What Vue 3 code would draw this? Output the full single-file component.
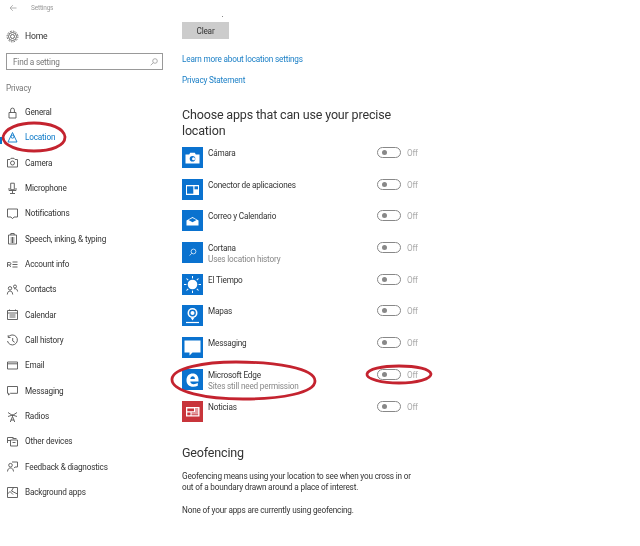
<script setup>
const nav = [
  { label: 'General', d: 'M3 6.500h7v5.500H3zM4.600 6.500V4a1.900 1.900 0 0 1 3.800 0v2.500' },
  { label: 'Location', active: true, d: 'M6.500 1.500 2 11h9zM6.500 4.200a1.500 1.500 0 1 1 0 3 1.500 1.500 0 0 1 0-3z' },
  { label: 'Camera', d: 'M1.500 3.500h2.500l1-1.200h3l1 1.200h2.500v7.500h-10zM6.500 5a2 2 0 1 1 0 4 2 2 0 0 1 0-4z' },
  { label: 'Microphone', d: 'M4.700 1.200h3.600v6.500H4.700zM3 6v2.500h7V6M6.500 8.500V11M4 11.500h5' },
  { label: 'Notifications', d: 'M1.500 2h10v8H8l-1.500 1.700L5 10H1.500z' },
  { label: 'Speech, inking, & typing', d: 'M2.500 3h8v9h-8zM4.800 3V1.500h3.400V3M4.500 6h4M4.500 8h4M4.500 10h4M6.500 5v6' },
  { label: 'Account info', d: 'M1.500 9V4.500h2.200a1.200 1.200 0 0 1 0 2.400H1.500M3.500 7l1.200 2M6.500 4h5M6.500 6.500h5M6.500 9h5' },
  { label: 'Contacts', d: 'M4 7a1.700 1.700 0 1 1 0-3.400A1.700 1.700 0 0 1 4 7zM1.300 11.500C1.500 9 2.500 8 4 8s2.500 1 2.700 3.500M9 5a1.500 1.500 0 1 1 0-3 1.500 1.500 0 0 1 0 3zM8 5.800c2-.5 3.500.5 3.600 2.700' },
  { label: 'Calendar', d: 'M1.500 2.500h10v9h-10zM1.500 5h10M3.500 1.500v1.500M9.500 1.500v1.500M3.500 7h6M3.500 9h6' },
  { label: 'Call history', d: 'M2.200 3.200A5 5 0 1 1 1.500 7M2.200 1.200v2.300h2.300M6.700 4v3l2 1.300' },
  { label: 'Email', d: 'M1.500 3h10v7h-10zM1.500 4.800h10' },
  { label: 'Messaging', d: 'M1.500 2.500h10v6.800H4.500l-2 1.700V9.300h-1z' },
  { label: 'Radios', d: 'M2 2.500l4.500 3 4.500-3M6.500 4.500v2M2 6.500 6.500 5l4.500 1.500M4.300 12l2.200-5.500L8.700 12M4.800 10h3.400' },
  { label: 'Other devices', d: 'M1.500 8V2.500h6M1.500 5.500h3M4.500 5h7v6h-7zM6.500 3.500h4M6.500 7.500h3' },
  { label: 'Feedback & diagnostics', d: 'M4.500 7a1.800 1.800 0 1 1 0-3.600 1.800 1.800 0 0 1 0 3.600zM1.500 11.500C1.700 9 3 8 4.500 8S7.300 9 7.500 11.500M6 2h5.500v5H9L8 8.200' },
  { label: 'Background apps', d: 'M1.500 1.500h10v10h-10zM1.500 8l2.500-2.500 3 3M7.500 1.500 5.500 5l6 3' },
]

const apps = [
  { name: 'Cámara', kind: 'camera' },
  { name: 'Conector de aplicaciones', kind: 'connector' },
  { name: 'Correo y Calendario', kind: 'mail' },
  { name: 'Cortana', sub: 'Uses location history', kind: 'cortana' },
  { name: 'El Tiempo', kind: 'weather' },
  { name: 'Mapas', kind: 'maps' },
  { name: 'Messaging', kind: 'message' },
  { name: 'Microsoft Edge', sub: 'Sites still need permission', kind: 'edge' },
  { name: 'Noticias', kind: 'news' },
]
const rays = [0, 45, 90, 135, 180, 225, 270, 315]
</script>

<template>
  <div class="page">
    <aside class="side">
      <div class="titlebar">
        <svg class="back" viewBox="0 0 8 8" width="8" height="8"><path d="M7.500 4H1M3.800 1.200 1 4l2.800 2.800" /></svg>
        <span>Settings</span>
      </div>
      <div class="home">
        <svg class="nav-icon" viewBox="0 0 13 13" width="13" height="13">
          <circle cx="6.500" cy="6.500" r="2" />
          <circle cx="6.500" cy="6.500" r="4" />
          <circle cx="6.500" cy="6.500" r="5.400" stroke-dasharray="1.600 1.200" />
        </svg>
        <span>Home</span>
      </div>
      <div class="search">
        <span>Find a setting</span>
        <svg viewBox="0 0 8 8" width="8" height="8"><circle cx="5" cy="3" r="2.300" /><path d="M3.300 4.700.7 7.300" /></svg>
      </div>
      <div class="section">Privacy</div>
      <nav class="nav">
        <div v-for="item in nav" :key="item.label" class="nav-row" :class="{ active: item.active }">
          <svg class="nav-icon" viewBox="0 0 13 13" width="13" height="13"><path :d="item.d" /></svg>
          <span>{{ item.label }}</span>
        </div>
      </nav>
    </aside>

    <main class="main">
      <div class="speck"></div>
      <div class="clear">Clear</div>
      <a class="link first">Learn more about location settings</a>
      <a class="link second">Privacy Statement</a>
      <h2 class="choose">Choose apps that can use your precise<br />location</h2>

      <div class="apps">
        <div v-for="app in apps" :key="app.name" class="app">
          <svg class="tile" :class="{ red: app.kind === 'news' }" viewBox="0 0 21 21" width="21" height="21">
            <g v-if="app.kind === 'camera'">
              <path class="w" d="M3.500 7.500h3.700l1-1.700h4.600l1 1.700h3.700v9h-14z" />
              <circle cx="10.500" cy="11.800" r="2.800" fill="#0a72cf" />
              <circle cx="11.500" cy="11.800" r="1.500" fill="#fff" />
            </g>
            <g v-else-if="app.kind === 'connector'">
              <path class="w" d="M4 6h13v10H4z" />
              <path d="M5 7.300h6.300v7.400H5z" fill="#0a72cf" />
              <path d="M12.500 7.300h3.500v3h-3.500z" fill="#0a72cf" />
            </g>
            <g v-else-if="app.kind === 'mail'">
              <path class="w" d="M4.500 10.500 10.500 7l6 3.500V15.500h-12z" />
              <path d="M6.500 10 10.500 8l4 2-4 2.200z" fill="#0a72cf" />
            </g>
            <g v-else-if="app.kind === 'cortana'">
              <circle cx="11.500" cy="9.500" r="2.400" fill="none" stroke="#cfe3f6" stroke-width=".9" />
              <path d="M9.800 11.200 7.600 13.600" stroke="#cfe3f6" stroke-width=".9" />
            </g>
            <g v-else-if="app.kind === 'weather'">
              <circle cx="10.500" cy="10.500" r="4.800" fill="#fff" />
              <rect v-for="r in rays" :key="r" x="10" y="2" width="1" height="2.400" fill="#fff" :transform="`rotate(${r} 10.500 10.500)`" />
            </g>
            <g v-else-if="app.kind === 'maps'">
              <circle cx="10.500" cy="8" r="5" fill="#fff" />
              <circle cx="10.500" cy="8" r="3.400" fill="#0a72cf" />
              <circle cx="10.500" cy="8" r="2" fill="#fff" />
              <path class="w" d="M8.500 12.500h4l-2 3z" />
              <path d="M4 17.500h13" stroke="#fff" stroke-width="1.200" />
            </g>
            <path v-else-if="app.kind === 'message'" class="w" d="M2.500 3.500h16v12h-8l-3 3v-3h-5z" />
            <g v-else-if="app.kind === 'edge'">
              <path class="w" d="M4.500 11.200C4.500 7 7 4.500 10.800 4.500c3.500 0 5.700 2.400 5.700 6.500v1.400H8.300c.1 1.800 1.500 2.800 3.400 2.800 1.500 0 2.900-.4 4.100-1.100v2.600c-1.300.7-2.800 1-4.500 1-4.200 0-6.800-2.400-6.800-6.500zm3.800-1.300h4.600c0-1.500-.8-2.600-2.200-2.600-1.300 0-2.200 1-2.400 2.600z" />
            </g>
            <g v-else>
              <path class="w" d="M4 6h13.500v9.500H4z" />
              <path d="M5.300 7.500h6.700v2.800H5.300zM13 7.500h3.200v1H13zM13 9.500h3.200v1H13zM5.300 11.500h3.200v2.700H5.300zM9.500 11.500H16.200v1H9.500zM9.500 13.200H16.200v1H9.500z" fill="#c8353b" />
            </g>
          </svg>
          <div class="app-text">
            <div class="app-name">{{ app.name }}</div>
            <div v-if="app.sub" class="app-sub">{{ app.sub }}</div>
          </div>
          <div class="toggle"><i></i></div>
          <span class="off">Off</span>
        </div>
      </div>

      <h2 class="geo">Geofencing</h2>
      <p class="body">Geofencing means using your location to see when you cross in or<br />out of a boundary drawn around a place of interest.</p>
      <p class="body none">None of your apps are currently using geofencing.</p>
    </main>

    <svg class="marks" viewBox="0 0 640 546" width="640" height="546">
      <path d="M3 137c2-9 16-14 31-14 16 0 30 5 31 14 0 9-14 14-31 14-15 0-31-5-31-14" />
      <path d="M172 379c1-11 32-17 64-17 39 0 79 6 79 19 0 12-34 18-72 18-36 0-72-7-71-20z" />
      <path d="M367 374c1-5 15-8 32-8 18 0 31 3 32 8 0 5-14 9-32 9-17 0-33-4-32-9z" />
    </svg>
    <div class="edge-tick"></div>
  </div>
</template>

<style>
html, body { margin: 0; background: #fff; }
</style>

<style scoped>
.page {
  position: relative;
  display: flex;
  width: 640px;
  height: 546px;
  overflow: hidden;
  background: #fff;
  font-family: Roboto, "Liberation Sans", sans-serif;
  font-size: 8.2px;
  letter-spacing: -0.18px;
  color: #333;
  filter: blur(0.3px);
}
.side { width: 182px; flex: none; }
.titlebar {
  display: flex;
  align-items: center;
  height: 16px;
  padding-left: 9px;
  font-size: 6.500px;
  color: #999;
}
.titlebar span { margin-left: 14px; }
.back { fill: none; stroke: #aaa; stroke-width: .9; }
.home {
  display: flex;
  align-items: center;
  height: 20px;
  margin-top: 10px;
  padding-left: 6px;
  font-size: 8.600px;
  color: #333;
}
.home span { margin-left: 6px; }
.search {
  box-sizing: border-box;
  display: flex;
  align-items: center;
  justify-content: space-between;
  width: 157px;
  height: 17px;
  margin: 7px 0 0 6px;
  padding: 0 4px 0 6px;
  border: 1px solid #999;
  color: #777;
}
.search svg { fill: none; stroke: #999; stroke-width: .8; }
.section { margin-top: 11px; padding-left: 6px; height: 14px; line-height: 14px; color: #777; }
.nav { margin-top: 4.500px; }
.nav-row {
  position: relative;
  display: flex;
  align-items: center;
  height: 25.33px;
  padding-left: 6px;
  color: #333;
}
.nav-row span { margin-left: 6px; }
.nav-icon { flex: none; fill: none; stroke: #555; stroke-width: .9; }
.nav-row.active { color: #0a78c8; }
.nav-row.active .nav-icon { stroke: #0a78c8; }

.main { flex: 1; min-width: 0; position: relative; }
.speck { position: absolute; left: 40px; top: 16px; width: 1px; height: 1px; background: #888; }
.clear {
  width: 47px;
  height: 17px;
  margin-top: 22px;
  background: #ccc;
  color: #333;
  text-align: center;
  line-height: 18px;
}
.link { display: block; height: 12px; line-height: 12px; color: #1a7fc6; }
.first { margin-top: 14px; }
.second { margin-top: 9px; }
.choose {
  margin: 21px 0 0;
  font-size: 12.500px;
  letter-spacing: -0.16px;
  font-weight: 400;
  line-height: 16px;
  color: #333;
}
.apps { margin-top: 8px; }
.app { position: relative; display: flex; height: 31.7px; }
.tile { flex: none; background: #0a72cf; }
.tile.red { background: #c8353b; }
.w { fill: #fff; }
.app-text { width: 156px; margin-left: 5px; padding-top: 1px; }
.app-name { height: 11px; line-height: 11px; color: #333; }
.app-sub { height: 11px; line-height: 11px; color: #888; }
.toggle {
  box-sizing: border-box;
  position: relative;
  width: 24px;
  height: 11px;
  margin-left: 13px;
  border: 1px solid #888;
  border-radius: 6px;
}
.toggle i {
  position: absolute;
  left: 4px;
  top: 2px;
  width: 5px;
  height: 5px;
  border-radius: 50%;
  background: #888;
}
.off { margin-left: 6px; padding-top: 1px; height: 11px; line-height: 11px; color: #aaa; }
.geo { margin: 13px 0 0; font-size: 12.500px; letter-spacing: -0.16px; font-weight: 400; line-height: 16px; color: #333; }
.body { margin: 10px 0 0; line-height: 11px; color: #333; }
.body.none { margin-top: 12px; }
.marks { position: absolute; left: 0; top: 0; fill: none; stroke: #c4232f; stroke-width: 2.800; pointer-events: none; }
.edge-tick { position: absolute; left: 0; top: 137px; width: 2px; height: 7px; background: #0a78c8; }
</style>
